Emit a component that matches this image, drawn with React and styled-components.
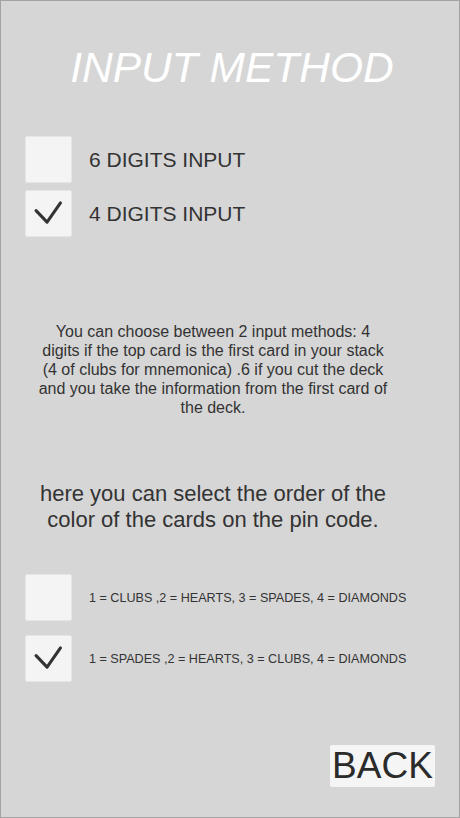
import React from "react";
import styled, { createGlobalStyle } from "styled-components";

const Global = createGlobalStyle`
  html, body { margin: 0; padding: 0; }
  body { font-family: "Liberation Sans", Arial, sans-serif; background: #d6d6d6; }
`;

const Screen = styled.div`
  box-sizing: border-box;
  width: 460px;
  height: 818px;
  background: #d6d6d6;
  border: 1px solid #a3a3a3;
  display: flex;
  flex-direction: column;
  font-family: "Liberation Sans", Arial, sans-serif;
  color: #333333;
`;

const Title = styled.h1`
  margin: 43px 0 0 0;
  font-size: 42.5px;
  line-height: 48px;
  font-style: italic;
  font-weight: normal;
  color: #ffffff;
  text-align: center;
  padding-left: 4px;
`;

const OptionList = styled.div`
  display: flex;
  flex-direction: column;
  gap: ${(p) => p.$gap}px;
  margin-top: ${(p) => p.$top}px;
  padding-left: 24px;
`;

const Option = styled.div`
  display: flex;
  align-items: center;
  gap: 17px;
`;

const Box = styled.div`
  box-sizing: border-box;
  width: 47px;
  height: 47px;
  background: #f4f4f4;
  border: 1px solid #e6e6e6;
  border-radius: 2px;
  display: flex;
  align-items: center;
  justify-content: center;
  flex-shrink: 0;
`;

const Label = styled.span`
  font-size: ${(p) => p.$size}px;
  color: #333333;
  white-space: nowrap;
`;

const Info = styled.p`
  margin: ${(p) => p.$top}px 0 0 24px;
  width: 376px;
  text-align: center;
  font-size: ${(p) => p.$size}px;
  line-height: ${(p) => p.$lh}px;
  color: #333333;
`;

const Footer = styled.div`
  margin-top: auto;
  padding: 0 24px 30px 0;
  display: flex;
  justify-content: flex-end;
`;

const BackButton = styled.button`
  width: 105px;
  height: 42px;
  padding: 0;
  border: none;
  border-radius: 2px;
  background: #f5f5f5;
  font-family: "Liberation Sans", Arial, sans-serif;
  font-size: 37px;
  line-height: 42px;
  color: #2b2b2b;
`;

const Check = () => (
  <svg width="47" height="47" viewBox="0 0 47 47">
    <path
      d="M10.5 20.5 L22 32.5 L36 12.5"
      fill="none"
      stroke="#333333"
      strokeWidth="3.2"
      strokeLinecap="round"
      strokeLinejoin="round"
    />
  </svg>
);

const CheckOption = ({ checked, size, children }) => (
  <Option>
    <Box>{checked && <Check />}</Box>
    <Label $size={size}>{children}</Label>
  </Option>
);

export default function App() {
  return (
    <>
      <Global />
      <Screen>
        <Title>INPUT METHOD</Title>
        <OptionList $top={44} $gap={7}>
          <CheckOption size={21}>6 DIGITS INPUT</CheckOption>
          <CheckOption size={21} checked>4 DIGITS INPUT</CheckOption>
        </OptionList>
        <Info $top={85} $size={16} $lh={19}>
          You can choose between 2 input methods: 4<br />
          digits if the top card is the first card in your stack<br />
          (4 of clubs for mnemonica) .6 if you cut the deck<br />
          and you take the information from the first card of<br />
          the deck.
        </Info>
        <Info $top={64} $size={22} $lh={26}>
          here you can select the order of the<br />
          color of the cards on the pin code.
        </Info>
        <OptionList $top={41} $gap={14}>
          <CheckOption size={12.6}>1 = CLUBS ,2 = HEARTS, 3 = SPADES, 4 = DIAMONDS</CheckOption>
          <CheckOption size={12.6} checked>1 = SPADES ,2 = HEARTS, 3 = CLUBS, 4 = DIAMONDS</CheckOption>
        </OptionList>
        <Footer>
          <BackButton>BACK</BackButton>
        </Footer>
      </Screen>
    </>
  );
}
